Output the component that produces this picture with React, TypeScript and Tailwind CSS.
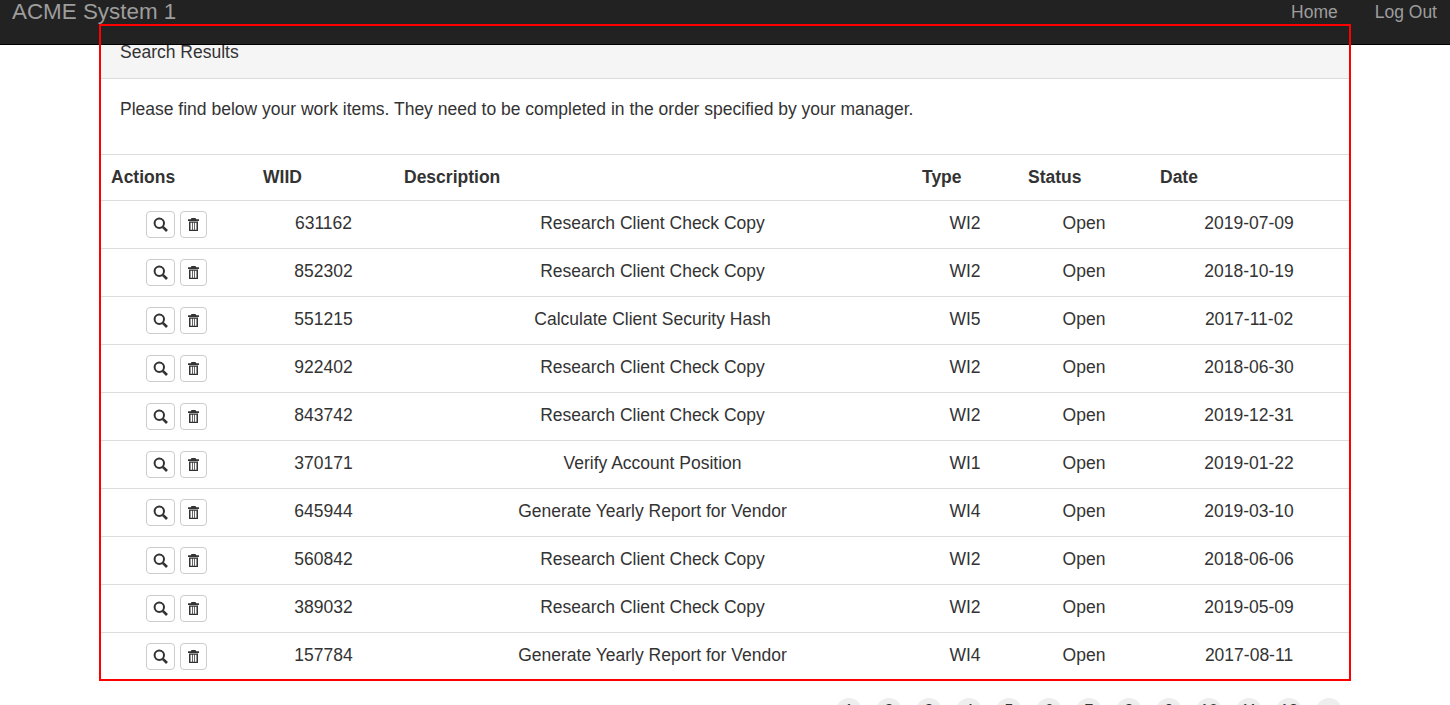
const rows = [
  ["631162", "Research Client Check Copy", "WI2", "2019-07-09"],
  ["852302", "Research Client Check Copy", "WI2", "2018-10-19"],
  ["551215", "Calculate Client Security Hash", "WI5", "2017-11-02"],
  ["922402", "Research Client Check Copy", "WI2", "2018-06-30"],
  ["843742", "Research Client Check Copy", "WI2", "2019-12-31"],
  ["370171", "Verify Account Position", "WI1", "2019-01-22"],
  ["645944", "Generate Yearly Report for Vendor", "WI4", "2019-03-10"],
  ["560842", "Research Client Check Copy", "WI2", "2018-06-06"],
  ["389032", "Research Client Check Copy", "WI2", "2019-05-09"],
  ["157784", "Generate Yearly Report for Vendor", "WI4", "2017-08-11"],
];

const pages = ["1", "2", "3", "4", "5", "6", "7", "8", "9", "10", "11", "12", "»"];

function SearchIcon() {
  return (
    <svg width="15" height="15" viewBox="0 0 15 15" fill="none" stroke="currentColor">
      <circle cx="6.300" cy="6.300" r="4.700" strokeWidth="2" />
      <path d="M9.800 9.800l4.200 4.200" strokeWidth="2.600" />
    </svg>
  );
}

function TrashIcon() {
  return (
    <svg width="11" height="13" viewBox="0 0 11 13" fill="currentColor">
      <path d="M3.500 0h4l.8 1.200H11V3H0V1.200h2.700z" />
      <path fillRule="evenodd" d="M1 3.600h9V13H1zM2.500 4.800v6.900h1.500V4.800zM4.750 4.800v6.900h1.500V4.800zM7 4.800v6.900h1.500V4.800z" />
    </svg>
  );
}

export default function App() {
  return (
    <div className="relative h-[705px] overflow-hidden bg-white font-['Liberation_Sans',Arial,sans-serif] text-[17.5px] text-[#333]">
      {/* Navbar */}
      <nav className="relative z-10 flex h-[45px] items-start justify-between border-b border-black bg-[#222] pl-3 pr-[13px] text-[#9d9d9d]">
        <span className="text-[22.4px] leading-[24px]">ACME System 1</span>
        <div className="flex gap-[37px] pt-[2px] leading-[20px]">
          <span>Home</span>
          <span>Log Out</span>
        </div>
      </nav>

      {/* Red highlight over the panel */}
      <div className="pointer-events-none absolute left-[99px] top-[24px] z-20 h-[657px] w-[1252px] border-2 border-[#f00]" />

      <div className="mx-[101px]">
        <div className="flex h-[34px] items-start border-b border-[#ddd] bg-[#f5f5f5] px-[19px] leading-[14px]">
          Search Results
        </div>
        <p className="h-[75px] px-[19px] pt-[20px] leading-[20px]">
          Please find below your work items. They need to be completed in the order specified by your manager.
        </p>
        <table className="w-[1248px] table-fixed border-collapse">
          <thead>
            <tr className="h-[46px] border-y border-[#ddd] text-left font-bold">
              <th className="w-[152px] pl-[10px]">Actions</th>
              <th className="w-[141px] pl-[10px]">WIID</th>
              <th className="w-[518px] pl-[10px]">Description</th>
              <th className="w-[106px] pl-[10px]">Type</th>
              <th className="w-[132px] pl-[10px]">Status</th>
              <th className="pl-[10px]">Date</th>
            </tr>
          </thead>
          <tbody>
            {rows.map((r) => (
              <tr key={r[0]} className="h-[48px] border-b border-[#ddd] text-center last:border-b-transparent">
                <td>
                  <div className="flex justify-center gap-[5px] pr-[2px]">
                    <button type="button" className="flex h-[27px] w-[29px] items-center justify-center rounded-[4px] border border-[#ccc] bg-white text-[#333]">
                      <SearchIcon />
                    </button>
                    <button type="button" className="flex h-[27px] w-[27px] items-center justify-center rounded-[4px] border border-[#ccc] bg-white text-[#333]">
                      <TrashIcon />
                    </button>
                  </div>
                </td>
                <td className="pb-[2px]">{r[0]}</td>
                <td className="pb-[2px] pr-[1px]">{r[1]}</td>
                <td className="pb-[2px]">{r[2]}</td>
                <td className="pb-[2px]">Open</td>
                <td className="pb-[2px] pr-[1px]">{r[3]}</td>
              </tr>
            ))}
          </tbody>
        </table>
      </div>

      {/* Pagination, cut off by the window */}
      <div className="absolute right-[108px] top-[698px] flex gap-[14px] text-[16px] leading-[26px] text-[#333]">
        {pages.map((p) => (
          <span key={p} className="flex h-[26px] w-[26px] items-center justify-center rounded-full bg-[#eee]">
            {p}
          </span>
        ))}
      </div>
    </div>
  );
}
